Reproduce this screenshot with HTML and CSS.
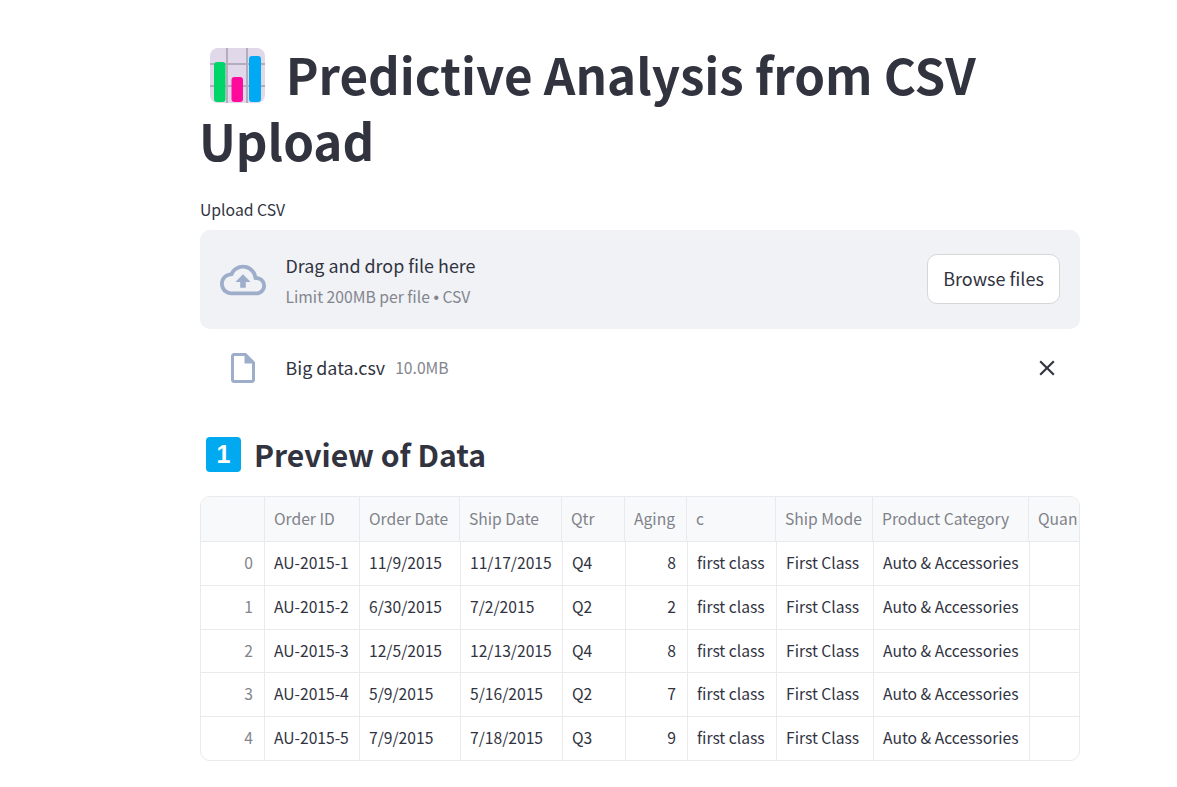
FILE: index.html
```html
<!DOCTYPE html>
<html lang="en">
<head>
  <meta charset="UTF-8" />
  <meta name="viewport" content="width=device-width, initial-scale=1" />
  <title>Predictive Analysis from CSV Upload</title>
  <link rel="stylesheet" href="styles.css">
</head>
<body>
  <main class="page">
    <h1 class="title">
      <svg class="chart-emoji" viewBox="0 0 55 55" aria-hidden="true">
        <rect width="55" height="55" rx="8" fill="#e1d8ea" />
        <path d="M17 0v55M37 0v55M0 16h55M0 38h55" stroke="#b3aebd" stroke-width="2" fill="none" />
        <rect x="4" y="14" width="11.5" height="40" rx="3" fill="#00d56a" />
        <rect x="21.5" y="29" width="11.5" height="25" rx="3" fill="#ff0a9c" />
        <rect x="39" y="8" width="12" height="46" rx="3" fill="#00a9f4" />
      </svg>
      Predictive Analysis from CSV Upload
    </h1>

    <label class="upload-label">Upload CSV</label>
    <section class="dropzone">
      <svg class="cloud-icon" viewBox="0 0 24 24" aria-hidden="true">
        <path d="M19.35 10.04C18.67 6.59 15.64 4 12 4 9.11 4 6.6 5.64 5.35 8.04 2.34 8.36 0 10.91 0 14c0 3.31 2.69 6 6 6h13c2.76 0 5-2.24 5-5 0-2.64-2.05-4.78-4.65-4.96zM19 18H6c-2.21 0-4-1.79-4-4 0-2.05 1.53-3.76 3.56-3.97l1.07-.11.5-.95C8.08 7.14 9.94 6 12 6c2.62 0 4.88 1.86 5.39 4.43l.3 1.5 1.53.11c1.56.1 2.78 1.41 2.78 2.96 0 1.65-1.35 3-3 3zM8 13h2.55v3h2.9v-3H16l-4-4z" />
      </svg>
      <div class="dropzone-text">
        <div class="drop-main">Drag and drop file here</div>
        <div class="drop-hint">Limit 200MB per file <span class="dot">•</span> CSV</div>
      </div>
      <button class="browse-btn">Browse files</button>
    </section>

    <section class="file-row">
      <svg class="file-icon" viewBox="0 0 24 24" aria-hidden="true">
        <path d="M14 2H6c-1.1 0-1.99.9-1.99 2L4 20c0 1.1.89 2 1.99 2H18c1.1 0 2-.9 2-2V8l-6-6zM6 20V4h7v5h5v11H6z" />
      </svg>
      <span class="file-name">Big data.csv</span>
      <span class="file-size">10.0MB</span>
      <svg class="close-icon" viewBox="0 0 24 24" aria-hidden="true">
        <path d="M19 6.41L17.59 5 12 10.59 6.41 5 5 6.41 10.59 12 5 17.59 6.41 19 12 13.41 17.59 19 19 17.59 13.41 12z" />
      </svg>
    </section>

    <h3 class="section-title"><span class="keycap">1</span>Preview of Data</h3>

    <section class="grid">
      <div class="grid-row grid-head">
        <span></span><span>Order ID</span><span>Order Date</span><span>Ship Date</span><span>Qtr</span><span class="num">Aging</span><span>c</span><span>Ship Mode</span><span>Product Category</span><span>Quan</span>
      </div>
      <div class="grid-row">
        <span class="idx">0</span><span>AU-2015-1</span><span>11/9/2015</span><span>11/17/2015</span><span>Q4</span><span class="num">8</span><span>first class</span><span>First Class</span><span>Auto &amp; Accessories</span><span></span>
      </div>
      <div class="grid-row">
        <span class="idx">1</span><span>AU-2015-2</span><span>6/30/2015</span><span>7/2/2015</span><span>Q2</span><span class="num">2</span><span>first class</span><span>First Class</span><span>Auto &amp; Accessories</span><span></span>
      </div>
      <div class="grid-row">
        <span class="idx">2</span><span>AU-2015-3</span><span>12/5/2015</span><span>12/13/2015</span><span>Q4</span><span class="num">8</span><span>first class</span><span>First Class</span><span>Auto &amp; Accessories</span><span></span>
      </div>
      <div class="grid-row">
        <span class="idx">3</span><span>AU-2015-4</span><span>5/9/2015</span><span>5/16/2015</span><span>Q2</span><span class="num">7</span><span>first class</span><span>First Class</span><span>Auto &amp; Accessories</span><span></span>
      </div>
      <div class="grid-row">
        <span class="idx">4</span><span>AU-2015-5</span><span>7/9/2015</span><span>7/18/2015</span><span>Q3</span><span class="num">9</span><span>first class</span><span>First Class</span><span>Auto &amp; Accessories</span><span></span>
      </div>
    </section>
  </main>
</body>
</html>
```

FILE: styles.css
```css
body {
  margin: 0;
  font-family: "Noto Sans CJK SC", "Noto Sans", sans-serif;
  background: #fff;
  color: #31333f;
}

.page {
  width: 880px;
  margin-left: 200px;
  padding-top: 41px;
}

.title {
  margin: 0 0 0 -1px;
  font-size: 49.3px;
  line-height: 65.5px;
  font-weight: 700;
}

.chart-emoji {
  width: 55px;
  height: 55px;
  margin: 0 9.5px 0 11px;
  vertical-align: -8px;
}

.upload-label {
  display: block;
  margin-top: 26px;
  font-size: 15.75px;
  line-height: 23px;
}

.dropzone {
  display: flex;
  align-items: center;
  height: 99px;
  margin-top: 9px;
  padding: 0 20px;
  box-sizing: border-box;
  background: #f0f2f6;
  border-radius: 10px;
}

.cloud-icon {
  width: 46px;
  height: 46px;
  margin-right: 19.5px;
  fill: #9dadca;
  flex: none;
}

.dropzone-text {
  flex: 1;
  padding-top: 2px;
}

.drop-main {
  font-size: 17.9px;
  line-height: 28px;
}

.drop-hint {
  margin-top: 6px;
  font-size: 15.7px;
  line-height: 24px;
  color: #83858d;
}

.dot {
  font-family: "Liberation Sans", sans-serif;
}

.browse-btn {
  width: 133px;
  height: 50px;
  margin-bottom: 2px;
  padding-bottom: 3px;
  background: #fff;
  border: 1px solid #d6d6d9;
  border-radius: 10px;
  font: inherit;
  font-size: 18px;
  color: #31333f;
}

.file-row {
  display: flex;
  align-items: center;
  height: 78px;
  padding-left: 25px;
}

.file-icon {
  width: 36px;
  height: 36px;
  margin-right: 24.5px;
  fill: #9dadca;
  flex: none;
}

.file-name {
  margin-bottom: 2px;
  font-size: 17.9px;
}

.file-size {
  margin: 0 0 2px 10px;
  font-size: 15.7px;
  color: #83858d;
}

.close-icon {
  width: 26px;
  height: 26px;
  margin-left: auto;
  margin-right: 20px;
  fill: #31333f;
}

.section-title {
  display: flex;
  align-items: center;
  margin: 25px 0 0;
  font-size: 30.1px;
  line-height: 44px;
  font-weight: 700;
}

.keycap {
  width: 35px;
  height: 35px;
  margin: 0 13px 0 6px;
  background: #00a9f0;
  border-radius: 4px;
  color: #fff;
  font-family: "Liberation Sans", sans-serif;
  font-size: 25px;
  line-height: 35px;
  font-weight: 700;
  text-align: center;
}

.grid {
  height: 265px;
  margin-top: 20px;
  box-sizing: border-box;
  border: 1px solid #e9eaed;
  border-radius: 10px;
  overflow: hidden;
}

.grid-row {
  display: grid;
  grid-template-columns: 64px 95px 101px 102px 63px 62px 89px 97px 156px 100px;
  height: 43.75px;
  box-sizing: border-box;
  border-bottom: 1px solid #e9eaed;
  font-size: 15.65px;
  line-height: 42px;
  white-space: nowrap;
}

.grid-row:last-child {
  border-bottom: none;
}

.grid-row span {
  padding: 0 11px 0 9px;
  border-right: 1px solid #e9eaed;
  overflow: hidden;
}

.grid-head {
  grid-template-columns: 64px 95px 100px 102px 63px 62px 89px 97px 156px 100px;
  height: 45px;
  line-height: 44px;
  background: #f8f9fb;
  color: #808289;
}

.grid-row .num,
.grid-row .idx {
  text-align: right;
}

.grid-row .idx {
  color: #83858d;
}
```
